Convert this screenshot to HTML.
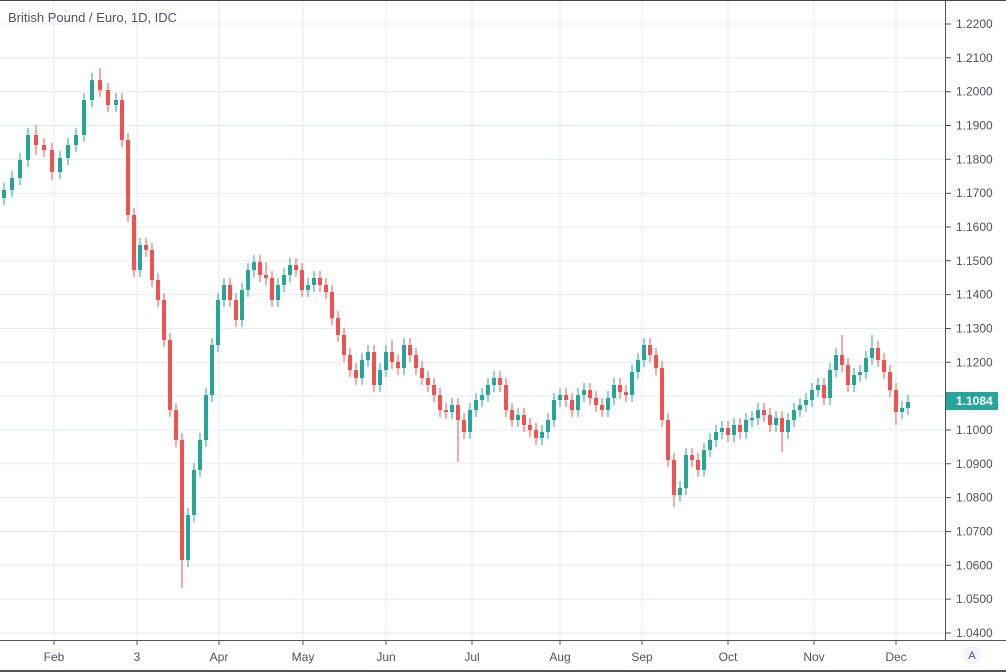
<!DOCTYPE html>
<html><head><meta charset="utf-8"><style>
html,body{margin:0;padding:0;background:#fff;}
body{width:1006px;height:672px;overflow:hidden;position:relative;font-family:"Liberation Sans",sans-serif;}
svg{position:absolute;left:0;top:0;}
</style></head><body>
<svg width="1006" height="672" xmlns="http://www.w3.org/2000/svg">
<rect x="0" y="0" width="1006" height="1" fill="#434651"/>
<g stroke="#e1ecf2" stroke-width="1">
<path d="M0 24H945M0 57.8H945M0 91.7H945M0 125.5H945M0 159.3H945M0 193.2H945M0 227H945M0 260.8H945M0 294.6H945M0 328.5H945M0 362.3H945M0 396.1H945M0 430H945M0 463.8H945M0 497.6H945M0 531.5H945M0 565.3H945M0 599.1H945M0 633H945"/>
<path d="M54 1V640M137 1V640M219 1V640M303 1V640M386 1V640M472 1V640M560 1V640M642 1V640M728 1V640M814 1V640M896 1V640"/>
</g>
<g stroke="#50535e" stroke-width="1">
<path d="M946 24H951M946 57.8H951M946 91.7H951M946 125.5H951M946 159.3H951M946 193.2H951M946 227H951M946 260.8H951M946 294.6H951M946 328.5H951M946 362.3H951M946 430H951M946 463.8H951M946 497.6H951M946 531.5H951M946 565.3H951M946 599.1H951M946 633H951"/>
<path d="M54 641V645M137 641V645M219 641V645M303 641V645M386 641V645M472 641V645M560 641V645M642 641V645M728 641V645M814 641V645M896 641V645"/>
</g>
<g font-size="12" fill="#50535e">
<text x="956" y="28">1.2200</text><text x="956" y="61.8">1.2100</text><text x="956" y="95.7">1.2000</text><text x="956" y="129.5">1.1900</text><text x="956" y="163.3">1.1800</text><text x="956" y="197.2">1.1700</text><text x="956" y="231">1.1600</text><text x="956" y="264.8">1.1500</text><text x="956" y="298.6">1.1400</text><text x="956" y="332.5">1.1300</text><text x="956" y="366.3">1.1200</text><text x="956" y="434">1.1000</text><text x="956" y="467.8">1.0900</text><text x="956" y="501.6">1.0800</text><text x="956" y="535.5">1.0700</text><text x="956" y="569.3">1.0600</text><text x="956" y="603.1">1.0500</text><text x="956" y="637">1.0400</text>
</g>
<g font-size="12" fill="#50535e" text-anchor="middle">
<text x="54" y="661">Feb</text><text x="137" y="661">3</text><text x="219" y="661">Apr</text><text x="303" y="661">May</text><text x="386" y="661">Jun</text><text x="472" y="661">Jul</text><text x="560" y="661">Aug</text><text x="642" y="661">Sep</text><text x="728" y="661">Oct</text><text x="814" y="661">Nov</text><text x="896" y="661">Dec</text>
</g>
<path stroke="#26a69a" stroke-width="1" fill="none" d="M4 183V205 M12 171V197 M20 153V185 M28 128V167 M60 151V179 M68 138V165 M76 128V152 M84 93V142 M92 73V107 M116 93V112 M140 238V277 M188 508V567 M194 463V522 M200 433V477 M206 388V447 M212 338V402 M218 293V352 M224 278V307 M242 283V327 M248 263V297 M254 255V277 M278 278V307 M284 268V292 M290 258V282 M308 278V297 M314 271V292 M362 353V385 M368 345V367 M380 363V392 M386 345V377 M404 338V375 M452 398V419 M470 403V439 M476 393V417 M482 388V407 M488 378V402 M494 371V392 M518 408V427 M542 425V445 M548 413V439 M554 393V427 M560 388V407 M578 388V417 M584 383V402 M608 391V417 M614 378V405 M632 365V402 M638 353V379 M644 338V367 M680 481V502 M686 448V495 M704 443V477 M710 433V457 M716 425V447 M722 421V439 M734 418V442 M746 413V439 M752 411V427 M758 403V425 M776 411V432 M788 413V439 M794 403V427 M800 398V417 M806 393V412 M812 383V407 M818 378V397 M830 363V405 M836 348V377 M854 368V392 M860 365V382 M866 351V379 M872 335V365 M902 401V419 M908 395V415"/>
<path stroke="#26a69a" stroke-width="4" fill="none" d="M4 198V190 M12 190V178 M20 178V160 M28 160V135 M60 172V158 M68 158V145 M76 145V135 M84 135V100 M92 100V80 M116 105V100 M140 270V245 M188 560V515 M194 515V470 M200 470V440 M206 440V395 M212 395V345 M218 345V300 M224 300V285 M242 320V290 M248 290V270 M254 270V262 M278 300V285 M284 285V275 M290 275V265 M308 290V285 M314 285V278 M362 378V360 M368 360V352 M380 385V370 M386 370V352 M404 368V345 M452 412V405 M470 432V410 M476 410V400 M482 400V395 M488 395V385 M494 385V378 M518 420V415 M542 438V432 M548 432V420 M554 420V400 M560 400V395 M578 410V395 M584 395V390 M608 410V398 M614 398V385 M632 395V372 M638 372V360 M644 360V345 M680 495V488 M686 488V455 M704 470V450 M710 450V440 M716 440V432 M722 432V428 M734 435V425 M746 432V420 M752 420V418 M758 418V410 M776 425V418 M788 432V420 M794 420V410 M800 410V405 M806 405V400 M812 400V390 M818 390V385 M830 398V370 M836 370V355 M854 385V375 M860 375V372 M866 372V358 M872 358V348 M902 412V408 M908 408V402"/>
<path stroke="#ef5350" stroke-width="1" fill="none" d="M36 125V155 M44 138V157 M52 143V180 M100 68V97 M108 83V112 M122 93V147 M128 133V222 M134 208V277 M146 238V257 M152 243V287 M158 273V307 M164 293V347 M170 333V417 M176 403V447 M182 433V588 M230 278V307 M236 293V327 M260 255V282 M266 262V285 M272 271V307 M296 258V277 M302 263V297 M320 271V292 M326 278V299 M332 285V325 M338 311V342 M344 328V362 M350 348V377 M356 363V385 M374 345V392 M392 340V369 M398 355V375 M410 338V362 M416 348V375 M422 361V385 M428 371V392 M434 378V402 M440 388V417 M446 403V419 M458 398V462 M464 413V439 M500 371V392 M506 378V417 M512 403V427 M524 408V432 M530 418V437 M536 423V445 M566 388V407 M572 393V417 M590 383V405 M596 391V412 M602 398V417 M620 378V399 M626 385V402 M650 338V362 M656 348V375 M662 361V427 M668 413V467 M674 453V507 M692 448V467 M698 453V477 M728 421V442 M740 418V439 M764 403V422 M770 408V432 M782 411V452 M824 378V405 M842 335V372 M848 358V392 M878 341V367 M884 353V379 M890 365V397 M896 383V425"/>
<path stroke="#ef5350" stroke-width="4" fill="none" d="M36 135V145 M44 145V150 M52 150V172 M100 80V90 M108 90V105 M122 100V140 M128 140V215 M134 215V270 M146 245V250 M152 250V280 M158 280V300 M164 300V340 M170 340V410 M176 410V440 M182 440V560 M230 285V300 M236 300V320 M260 262V275 M266 275V278 M272 278V300 M296 265V270 M302 270V290 M320 278V285 M326 285V292 M332 292V318 M338 318V335 M344 335V355 M350 355V370 M356 370V378 M374 352V385 M392 352V362 M398 362V368 M410 345V355 M416 355V368 M422 368V378 M428 378V385 M434 385V395 M440 395V410 M446 410V412 M458 405V420 M464 420V432 M500 378V385 M506 385V410 M512 410V420 M524 415V425 M530 425V430 M536 430V438 M566 395V400 M572 400V410 M590 390V398 M596 398V405 M602 405V410 M620 385V392 M626 392V395 M650 345V355 M656 355V368 M662 368V420 M668 420V460 M674 460V495 M692 455V460 M698 460V470 M728 428V435 M740 425V432 M764 410V415 M770 415V425 M782 418V432 M824 385V398 M842 355V365 M848 365V385 M878 348V360 M884 360V372 M890 372V390 M896 390V412"/>
<rect x="945" y="1" width="1" height="640" fill="#50535e"/>
<rect x="0" y="640" width="1006" height="1" fill="#50535e"/>
<rect x="0" y="670" width="1006" height="2" fill="#50535e"/>
<rect x="946" y="392" width="52" height="18" fill="#26a69a"/>
<text x="956" y="405" font-size="12" fill="#fff" font-weight="bold">1.1084</text>
<circle cx="972" cy="655" r="9" fill="#f0f3fa"/>
<text x="972" y="659" font-size="11" fill="#50535e" text-anchor="middle">A</text>
<text x="8" y="22" font-size="13" fill="#50535e">British Pound / Euro, 1D, IDC</text>
</svg>
</body></html>
